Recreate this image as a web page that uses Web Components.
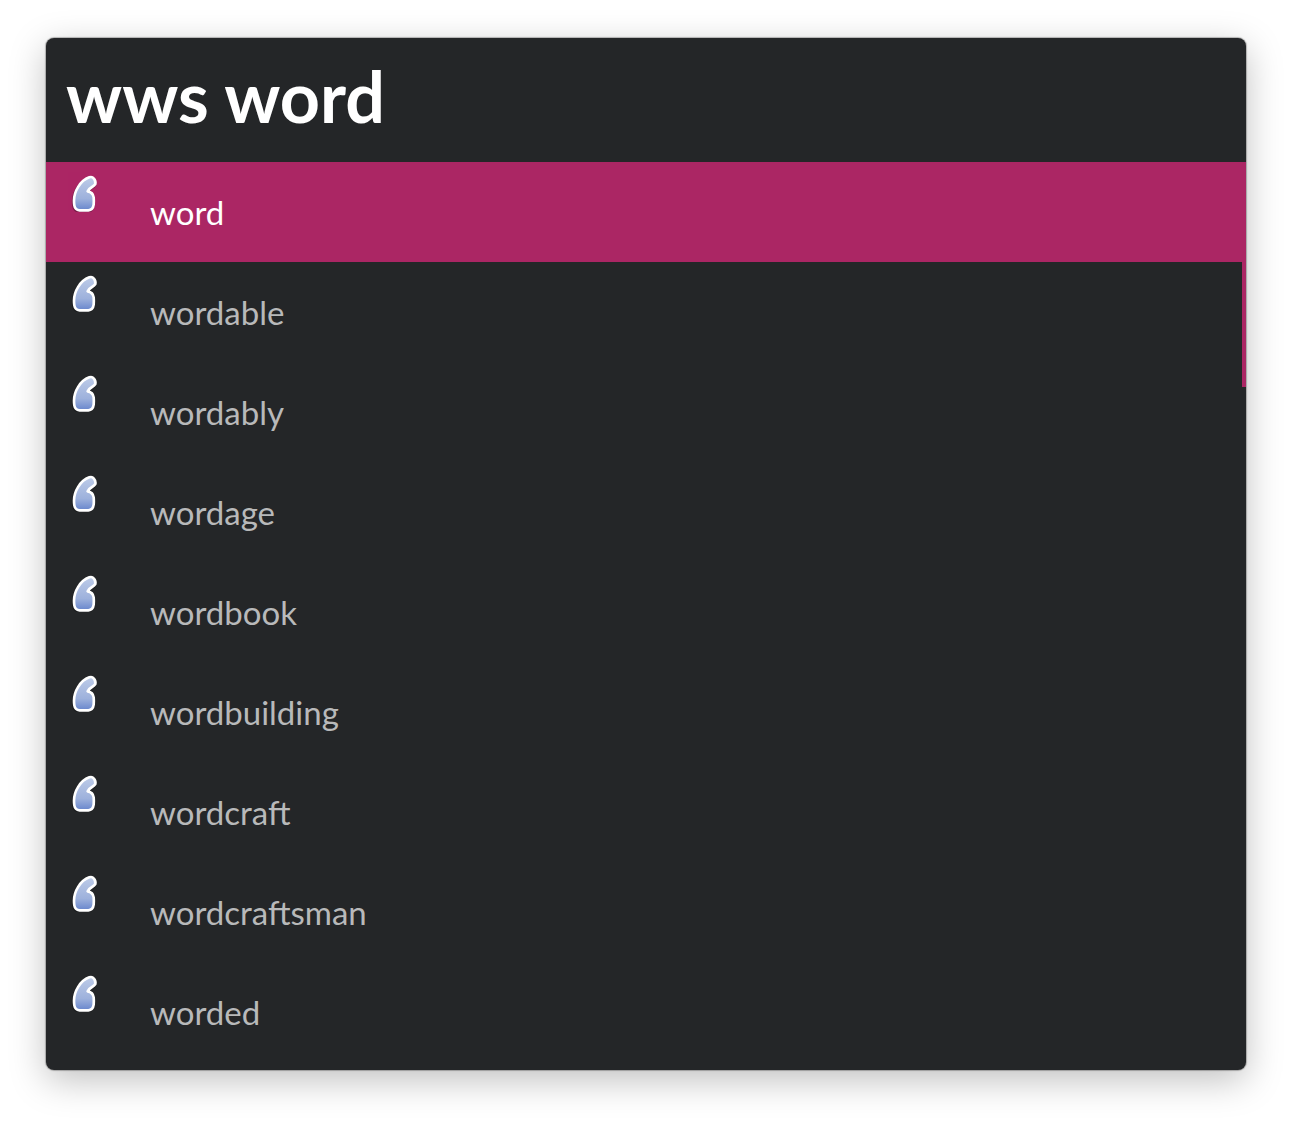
<!DOCTYPE html>
<html lang="en">
<head>
<meta charset="utf-8">
<title>Word search</title>
<style>
  body {
    margin: 0;
    background: #fff;
    font-family: Lato, "Open Sans", sans-serif;
  }
</style>
</head>
<body>
<launcher-window>
  <search-field slot="search" value="wws word"></search-field>
  <result-item selected>word</result-item>
  <result-item>wordable</result-item>
  <result-item>wordably</result-item>
  <result-item>wordage</result-item>
  <result-item>wordbook</result-item>
  <result-item>wordbuilding</result-item>
  <result-item>wordcraft</result-item>
  <result-item>wordcraftsman</result-item>
  <result-item>worded</result-item>
</launcher-window>

<script>
class LauncherWindow extends HTMLElement {
  constructor() {
    super();
    this.attachShadow({ mode: "open" }).innerHTML = `
      <style>
        :host { display: block; padding: 38px 46px 54px; }
        .panel {
          background: #242628;
          border-radius: 8px;
          overflow: hidden;
          padding-bottom: 8px;
          box-shadow: 0 0 1px 1px rgba(0, 0, 0, .26), 0 10px 36px rgba(0, 0, 0, .25);
        }
        .results { position: relative; display: flex; flex-direction: column; }
        .thumb {
          position: absolute;
          top: 0;
          right: 0;
          width: 4px;
          height: 25%;
          background: #ab2664;
        }
      </style>
      <main class="panel">
        <slot name="search"></slot>
        <div class="results">
          <slot></slot>
          <div class="thumb"></div>
        </div>
      </main>`;
  }
}

class SearchField extends HTMLElement {
  constructor() {
    super();
    this.attachShadow({ mode: "open" }).innerHTML = `
      <style>
        :host { display: flex; }
        input {
          flex: 1;
          min-width: 0;
          box-sizing: border-box;
          height: 124px;
          margin: 0;
          padding: 0 20px 8px;
          border: 0;
          outline: 0;
          background: transparent;
          color: #fff;
          font: 700 70px/84px Lato, "Open Sans", sans-serif;
        }
      </style>
      <input type="text" aria-label="Search" autocomplete="off" spellcheck="false">`;
    this.shadowRoot.querySelector("input").value = this.getAttribute("value") || "";
  }
}

class QuoteIcon extends HTMLElement {
  constructor() {
    super();
    this.attachShadow({ mode: "open" }).innerHTML = `
      <style>
        :host { display: block; width: 32px; height: 40px; }
        svg { display: block; width: 100%; height: 100%; }
      </style>
      <svg viewBox="24 21 96 120" aria-hidden="true">
        <defs>
          <linearGradient id="ink" x1="0" y1="0" x2="0" y2="1">
            <stop offset="0" stop-color="#bdcbe7"/>
            <stop offset=".65" stop-color="#9db1dc"/>
            <stop offset="1" stop-color="#6785cc"/>
          </linearGradient>
          <path id="mark" d="M42 107C42 80 60 47 88 37Q96 34 101 40Q108 48 106 57Q103 62 96 66Q87 71 83 79Q99 82 101 97Q102 109 101 119Q99 135 85 136L59 136Q45 134 43 121Q42 114 42 107Z"/>
        </defs>
        <use href="#mark" x="-2" y="3" fill="#000" stroke="#000" stroke-width="9" opacity=".28"/>
        <use href="#mark" fill="url(#ink)" stroke="#fff" stroke-width="8" stroke-linejoin="round"/>
      </svg>`;
  }
}

class ResultItem extends HTMLElement {
  constructor() {
    super();
    this.attachShadow({ mode: "open" }).innerHTML = `
      <style>
        :host { display: flex; color: #b8b9ba; }
        :host([selected]) { background: #ab2664; color: #fff; }
        button {
          flex: 1;
          display: flex;
          align-items: flex-start;
          gap: 50px;
          height: 100px;
          margin: 0;
          padding: 10px 22px;
          border: 0;
          background: transparent;
          color: inherit;
          font: 400 33px/80px Lato, "Open Sans", sans-serif;
          text-align: left;
        }
      </style>
      <button type="button"><quote-icon></quote-icon><span><slot></slot></span></button>`;
  }
}

customElements.define("quote-icon", QuoteIcon);
customElements.define("result-item", ResultItem);
customElements.define("search-field", SearchField);
customElements.define("launcher-window", LauncherWindow);
</script>
</body>
</html>
